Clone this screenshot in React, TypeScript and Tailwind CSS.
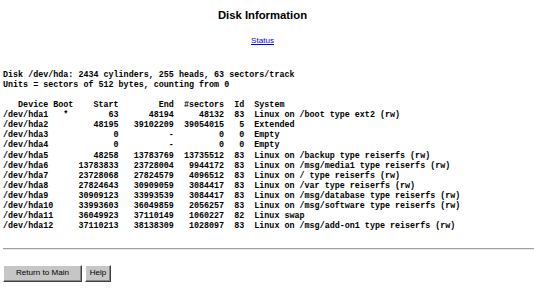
import React from "react";

type Part = {
  dev: string;
  boot?: boolean;
  start: string;
  end: string;
  sectors: string;
  id: string;
  system: string;
};

const parts: Part[] = [
  { dev: "/dev/hda1", boot: true, start: "63", end: "48194", sectors: "48132", id: "83", system: "Linux on /boot type ext2 (rw)" },
  { dev: "/dev/hda2", start: "48195", end: "39102209", sectors: "39054015", id: "5", system: "Extended" },
  { dev: "/dev/hda3", start: "0", end: "-", sectors: "0", id: "0", system: "Empty" },
  { dev: "/dev/hda4", start: "0", end: "-", sectors: "0", id: "0", system: "Empty" },
  { dev: "/dev/hda5", start: "48258", end: "13783769", sectors: "13735512", id: "83", system: "Linux on /backup type reiserfs (rw)" },
  { dev: "/dev/hda6", start: "13783833", end: "23728004", sectors: "9944172", id: "83", system: "Linux on /msg/media1 type reiserfs (rw)" },
  { dev: "/dev/hda7", start: "23728068", end: "27824579", sectors: "4096512", id: "83", system: "Linux on / type reiserfs (rw)" },
  { dev: "/dev/hda8", start: "27824643", end: "30909059", sectors: "3084417", id: "83", system: "Linux on /var type reiserfs (rw)" },
  { dev: "/dev/hda9", start: "30909123", end: "33993539", sectors: "3084417", id: "83", system: "Linux on /msg/database type reiserfs (rw)" },
  { dev: "/dev/hda10", start: "33993603", end: "36049859", sectors: "2056257", id: "83", system: "Linux on /msg/software type reiserfs (rw)" },
  { dev: "/dev/hda11", start: "36049923", end: "37110149", sectors: "1060227", id: "82", system: "Linux swap" },
  { dev: "/dev/hda12", start: "37110213", end: "38138309", sectors: "1028097", id: "83", system: "Linux on /msg/add-on1 type reiserfs (rw)" },
];

const header =
  "   Device Boot" +
  "Start".padStart(9) +
  "End".padStart(11) +
  "#sectors".padStart(10) +
  "Id".padStart(4) +
  "  System";

const rows = parts.map(
  (p) =>
    p.dev.padEnd(12) +
    (p.boot ? "*" : " ") +
    p.start.padStart(10) +
    p.end.padStart(11) +
    p.sectors.padStart(10) +
    p.id.padStart(4) +
    "  " +
    p.system
);

const listing = [
  "Disk /dev/hda: 2434 cylinders, 255 heads, 63 sectors/track",
  "Units = sectors of 512 bytes, counting from 0",
  "",
  header,
  ...rows,
].join("\n");

export default function App() {
  return (
    <div className="w-[534px] h-[289px] bg-white overflow-hidden text-black">
      <div className="pr-[9px] font-['Liberation_Sans',Arial,sans-serif]">
        <h1 className="pt-[9px] text-center font-bold text-[11.3px] leading-[13px]">
          Disk Information
        </h1>
        <div className="mt-[14px] text-center text-[8.1px] leading-[10px]">
          <a href="#" className="text-[#0000ff] underline">
            Status
          </a>
        </div>
      </div>
      <pre className="mt-[24px] ml-[3px] font-['Liberation_Mono','Courier_New',monospace] font-bold text-[8.4px] leading-[10.07px]">
        {listing}
      </pre>
      <div className="mt-[17px] ml-[3px] h-[2px] border-t border-t-[#a0a0a0] border-b border-b-[#e8e8e8]" />
      <div className="mt-[15px] ml-[3px] flex gap-[3px] font-['Liberation_Sans',Arial,sans-serif]">
        <button className="w-[79px] h-[17px] bg-[#c6c6c6] text-[8.1px] leading-none border border-t-white border-l-white border-r-[#404040] border-b-[#404040] shadow-[inset_-1px_-1px_0_#868686]">
          Return to Main
        </button>
        <button className="w-[26px] h-[17px] bg-[#c6c6c6] text-[8.1px] leading-none border border-t-white border-l-white border-r-[#404040] border-b-[#404040] shadow-[inset_-1px_-1px_0_#868686]">
          Help
        </button>
      </div>
    </div>
  );
}
